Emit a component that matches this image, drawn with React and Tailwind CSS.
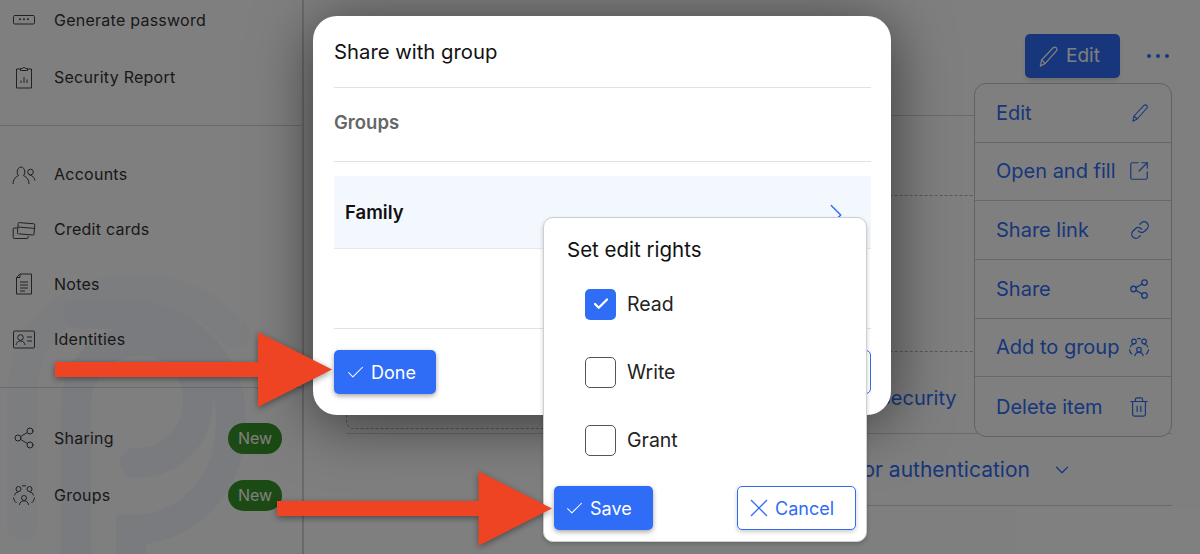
import { Check, ChevronDown, ChevronRight, Link, Share2, SquareArrowOutUpRight, Trash2 } from "lucide-react";

/* ---------- hand drawn icons ---------- */
function Pencil({ className }) {
  return (
    <svg viewBox="0 0 24 24" fill="none" stroke="currentColor" strokeWidth="1.3" strokeLinejoin="round" className={className}>
      <path d="M3.5 22 4.8 15.6 16.8 2.9a2.3 2.3 0 0 1 3.3 0 2.4 2.4 0 0 1 0 3.4L8.6 19.2Z" />
      <path d="M4.8 15.6 8.6 19.2" />
    </svg>
  );
}

function Cross() {
  return (
    <svg viewBox="0 0 18 18" fill="none" stroke="currentColor" strokeWidth="1.3" className="size-[18px]">
      <path d="M1 1 17 17M17 1 1 17" />
    </svg>
  );
}

function PasswordIcon() {
  return (
    <svg viewBox="0 0 24 24" fill="none" stroke="currentColor" strokeWidth="1" className="size-6 text-[#444]">
      <rect x="1.5" y="7.5" width="21" height="8.5" rx="1.2" />
      <circle cx="8" cy="11.2" r=".6" fill="currentColor" />
      <circle cx="12" cy="11.2" r=".6" fill="currentColor" />
      <circle cx="16" cy="11.2" r=".6" fill="currentColor" />
    </svg>
  );
}

function ReportIcon() {
  return (
    <svg viewBox="0 0 24 24" fill="none" stroke="currentColor" strokeWidth="1" className="size-6 text-[#444]">
      <path d="M8.5 4H4.5v19h15V4h-4" />
      <path d="M8.5 5.5V3.5h2a1.6 1.6 0 0 1 3 0h2v2Z" />
      <path d="M9 18v-2.5M12 18v-6M15 18v-3.5" />
    </svg>
  );
}

function AccountsIcon() {
  return (
    <svg viewBox="0 0 24 24" fill="none" stroke="currentColor" strokeWidth="1" className="size-6 text-[#444]">
      <path d="M6.5 13.5a4 4 0 0 1-1.300-3.500C5.300 7 7 5 9 5s3.800 2 3.800 5a4 4 0 0 1-1.300 3.500" />
      <path d="M1 22c0-4 2-7 5.500-8.500M17 22c0-4-2-7-5.500-8.500" />
      <circle cx="18.500" cy="10" r="2.800" />
      <path d="M17.500 13c3 .5 5 2.500 5.500 5.500" />
    </svg>
  );
}

function CardsIcon() {
  return (
    <svg viewBox="0 0 24 24" fill="none" stroke="currentColor" strokeWidth="1" className="size-6 text-[#444]">
      <path d="M5 11H2.200a1 1 0 0 0-1 1v8.500a1 1 0 0 0 1 1h13a1 1 0 0 0 1-1V19" />
      <path d="M6.200 6.500a1 1 0 0 1 1.100-.9l14.600 1.200a1 1 0 0 1 .9 1.100l-.8 9.200a1 1 0 0 1-1.100.9L6.300 16.800a1 1 0 0 1-.9-1.100Z" />
      <path d="M5.800 10 22.500 11.400" />
    </svg>
  );
}

function NotesIcon() {
  return (
    <svg viewBox="0 0 24 24" fill="none" stroke="currentColor" strokeWidth="1" className="size-6 text-[#444]">
      <path d="M8 2h11.500v20h-15V5.500Z" />
      <path d="M8 2v3.500H4.500M8 10h8M8 13h8M8 16h8M8 19h5" />
    </svg>
  );
}

function IdentityIcon() {
  return (
    <svg viewBox="0 0 24 24" fill="none" stroke="currentColor" strokeWidth="1" className="size-6 text-[#444]">
      <rect x="1.500" y="4" width="21" height="17" rx="1" />
      <circle cx="8.500" cy="10.500" r="2.800" />
      <path d="M4 18c.3-2.600 2-4 4.500-4s4.200 1.400 4.500 4M15 10h5M15 14h5" />
    </svg>
  );
}

function GroupsIcon({ className, strokeWidth = 1 }) {
  return (
    <svg viewBox="0 0 24 24" fill="none" stroke="currentColor" strokeWidth={strokeWidth} className={className}>
      <circle cx="6.500" cy="6" r="2.500" />
      <circle cx="17.500" cy="6" r="2.500" />
      <circle cx="12" cy="15" r="2.500" />
      <path d="M2.500 12.500c.3-2 2-3.500 4-3.500M21.500 12.500c-.3-2-2-3.500-4-3.500M7.500 22c.2-2.500 2-4.200 4.500-4.200s4.300 1.700 4.500 4.200" />
      <path d="M10 2.800h4M1.500 14.500c.3 2 1.200 4 3 5.500M22.500 14.500c-.3 2-1.200 4-3 5.500" />
    </svg>
  );
}

/* faint logo behind the sidebar */
function Watermark() {
  return (
    <svg viewBox="0 0 303 277" fill="none" stroke="#f3f6fe" strokeWidth="30" strokeLinecap="round" className="absolute left-0 top-[277px] h-[277px] w-[303px]">
      <path d="M22 248V120C22 55 70 12 135 12c40 0 75 15 100 45" opacity="0.55" />
      <path d="M78 37h45c65 0 108 48 108 108 0 68-48 108-100 108v40" />
      <path d="M76 290V130c0-42 30-66 64-66 36 0 58 28 58 60 0 36-28 62-63 62" />
    </svg>
  );
}

/* ---------- sidebar ---------- */
function NavRow({ icon, label, badge }) {
  return (
    <div className="flex h-10 items-center pl-3 pr-[20px]">
      <span className="flex w-[42px] shrink-0">{icon}</span>
      <span className="text-[16px] tracking-[0.25px] text-[#333]">{label}</span>
      {badge && (
        <span className="ml-auto flex h-[31px] w-[54px] items-center justify-center rounded-full bg-[#38942a] text-[16px] text-white">
          New
        </span>
      )}
    </div>
  );
}

function Sidebar() {
  return (
    <aside className="relative h-full w-[304px] shrink-0 border-r-2 border-[#d4d4d4]">
      <Watermark />
      <div className="relative flex flex-col">
        <div className="flex flex-col gap-[17px]">
          <NavRow icon={<PasswordIcon />} label="Generate password" />
          <NavRow icon={<ReportIcon />} label="Security Report" />
        </div>
        <div className="mt-[28px] border-t border-[#d4d4d4]" />
        <div className="mt-[28px] flex flex-col gap-[15px]">
          <NavRow icon={<AccountsIcon />} label="Accounts" />
          <NavRow icon={<CardsIcon />} label="Credit cards" />
          <NavRow icon={<NotesIcon />} label="Notes" />
          <NavRow icon={<IdentityIcon />} label="Identities" />
        </div>
        <div className="mt-[28px] border-t border-[#d4d4d4]" />
        <div className="mt-[30px] flex flex-col gap-[17px]">
          <NavRow icon={<Share2 size={24} strokeWidth={1} className="text-[#444]" />} label="Sharing" badge />
          <NavRow icon={<GroupsIcon className="size-6 text-[#444]" />} label="Groups" badge />
        </div>
      </div>
    </aside>
  );
}

/* ---------- main page, mostly covered by the dialogs ---------- */
function Main() {
  return (
    <main className="flex min-w-0 flex-1 flex-col pl-[42px] pr-[28px] text-[20px] text-[#2f6df6]">
      <div className="flex h-[116px] items-start justify-end border-b border-[#d4d4d4] pt-[34px]">
        <button className="flex h-[44px] w-[95px] items-center justify-center gap-[6px] rounded-[5px] bg-[#2f6df6] pr-[8px] text-[19px] text-white shadow-md">
          <Pencil className="size-[23px]" />
          Edit
        </button>
        <div className="ml-[27px] flex h-[44px] items-center gap-[5px] pr-[3px]">
          <span className="size-[4px] rounded-full bg-[#2f6df6]" />
          <span className="size-[4px] rounded-full bg-[#2f6df6]" />
          <span className="size-[4px] rounded-full bg-[#2f6df6]" />
        </div>
      </div>
      <div className="mt-[79px] h-[157px] rounded-b-[8px] border border-dashed border-[#b0b0b0]" />
      <div className="flex h-[82px] items-start border-b border-[#d4d4d4]">
        <div className="h-[77px] w-[360px] shrink-0 rounded-b-[8px] border border-dashed border-t-0 border-[#b0b0b0]" />
        <span className="ml-[172px] mt-[31px]">Security</span>
      </div>
      <div className="flex h-[72px] items-center border-b border-[#d4d4d4] pl-[431px] text-[21px]">
        <span className="whitespace-nowrap">Two factor authentication</span>
        <ChevronDown size={22} strokeWidth={1.3} className="ml-[21px]" />
      </div>
    </main>
  );
}

/* ---------- open menu ---------- */
function MenuRow({ label, icon }) {
  return (
    <div className="flex h-[58.67px] items-center justify-between border-b border-[#d0d0d0] pl-[21px] pr-[21px] last:border-b-0">
      <span>{label}</span>
      {icon}
    </div>
  );
}

function ActionMenu() {
  return (
    <div className="absolute left-[974px] top-[83px] w-[198px] rounded-[12px] border border-[#c4c4c4] bg-white text-[20px] text-[#2f6df6]">
      <MenuRow label="Edit" icon={<Pencil className="size-[20px]" />} />
      <MenuRow label="Open and fill" icon={<SquareArrowOutUpRight size={22} strokeWidth={1.3} />} />
      <MenuRow label="Share link" icon={<Link size={20} strokeWidth={1.5} />} />
      <MenuRow label="Share" icon={<Share2 size={22} strokeWidth={1.4} />} />
      <MenuRow label="Add to group" icon={<GroupsIcon className="size-[22px]" strokeWidth={1.3} />} />
      <MenuRow label="Delete item" icon={<Trash2 size={22} strokeWidth={1.3} />} />
    </div>
  );
}

/* ---------- dialogs ---------- */
function ShareDialog() {
  return (
    <div className="absolute left-[313px] top-[16px] h-[399px] w-[578px] rounded-[24px] bg-white pl-[21px] pr-[20px] shadow-[0_8px_60px_rgba(0,0,0,0.55)]">
      <div className="flex h-[72px] items-center border-b border-[#e2e2e2] pt-[2px] text-[20.3px] text-[#111]">Share with group</div>
      <div className="flex h-[74px] items-center border-b border-[#e2e2e2] pb-[3px] text-[18.5px] font-semibold text-[#666]">Groups</div>
      <div className="mt-[14px] flex h-[73px] items-center justify-between border-b border-[#e8e8e8] bg-[#f3f7fe] pl-[11px] pr-[16px]">
        <span className="pt-[2px] text-[18.5px] font-semibold text-[#111]">Family</span>
        <ChevronRight size={38} strokeWidth={0.9} className="mt-[6px] text-[#2f6df6]" />
      </div>
      <div className="h-[80px] border-b border-[#e2e2e2]" />
      <div className="mt-[21px] flex items-center justify-between">
        <button className="flex h-[44px] w-[102px] items-center gap-[5px] rounded-[5px] bg-[#2f6df6] pl-[11px] text-[18px] text-white shadow-[0_2px_5px_rgba(0,0,0,0.35)]">
          <Check size={21} strokeWidth={1.2} />
          Done
        </button>
        <button className="h-[44px] w-[102px] rounded-[5px] border border-[#2f6df6] bg-white" />
      </div>
    </div>
  );
}

function RightOption({ label, checked }) {
  return (
    <div className="flex h-[32px] items-center gap-[11px]">
      {checked ? (
        <span className="flex size-[31px] items-center justify-center rounded-[5px] bg-[#2f6df6] text-white">
          <Check size={18} strokeWidth={3} />
        </span>
      ) : (
        <span className="size-[31px] rounded-[5px] border border-[#555] bg-white" />
      )}
      <span className="pt-[2px] text-[19.5px] text-[#222]">{label}</span>
    </div>
  );
}

function RightsPopup() {
  return (
    <div className="absolute left-[543px] top-[217px] h-[325px] w-[324px] rounded-[10px] border border-[#cfcfcf] bg-white shadow-[0_2px_4px_rgba(0,0,0,0.2)]">
      <div className="pl-[23px] pt-[19px] text-[20.5px] leading-[26px] text-[#111]">Set edit rights</div>
      <div className="mt-[25px] flex flex-col gap-[36px] pl-[41px]">
        <RightOption label="Read" checked />
        <RightOption label="Write" />
        <RightOption label="Grant" />
      </div>
      <div className="mt-[30px] flex items-center justify-between px-[10px]">
        <button className="flex h-[44px] w-[99px] items-center gap-[5px] rounded-[5px] bg-[#2f6df6] pl-[10px] text-[18px] text-white shadow-[0_2px_5px_rgba(0,0,0,0.35)]">
          <Check size={21} strokeWidth={1.2} />
          Save
        </button>
        <button className="flex h-[44px] w-[119px] items-center gap-[7px] rounded-[5px] border border-[#2f6df6] bg-white pl-[12px] text-[18px] text-[#2f6df6] shadow-[0_2px_4px_rgba(0,0,0,0.2)]">
          <Cross />
          Cancel
        </button>
      </div>
    </div>
  );
}

function Arrow({ className }) {
  return (
    <svg viewBox="0 0 277 75" className={className}>
      <path d="M0 30H203V0L277 37.500 203 75V45H0Z" fill="#ee4423" />
    </svg>
  );
}

export default function App() {
  return (
    <div className="relative flex h-[554px] w-[1200px] overflow-hidden bg-white font-[Inter,sans-serif]">
      <Sidebar />
      <Main />
      <ActionMenu />
      {/* dim layer under the dialogs */}
      <div className="absolute inset-0 bg-black/50" />
      <ShareDialog />
      <RightsPopup />
      {/* annotations */}
      <Arrow className="absolute left-[55px] top-[332px] h-[75px] w-[277px] drop-shadow-[0_2px_3px_rgba(0,0,0,0.4)]" />
      <Arrow className="absolute left-[277px] top-[471px] h-[75px] w-[275px] drop-shadow-[0_2px_3px_rgba(0,0,0,0.4)]" />
    </div>
  );
}
